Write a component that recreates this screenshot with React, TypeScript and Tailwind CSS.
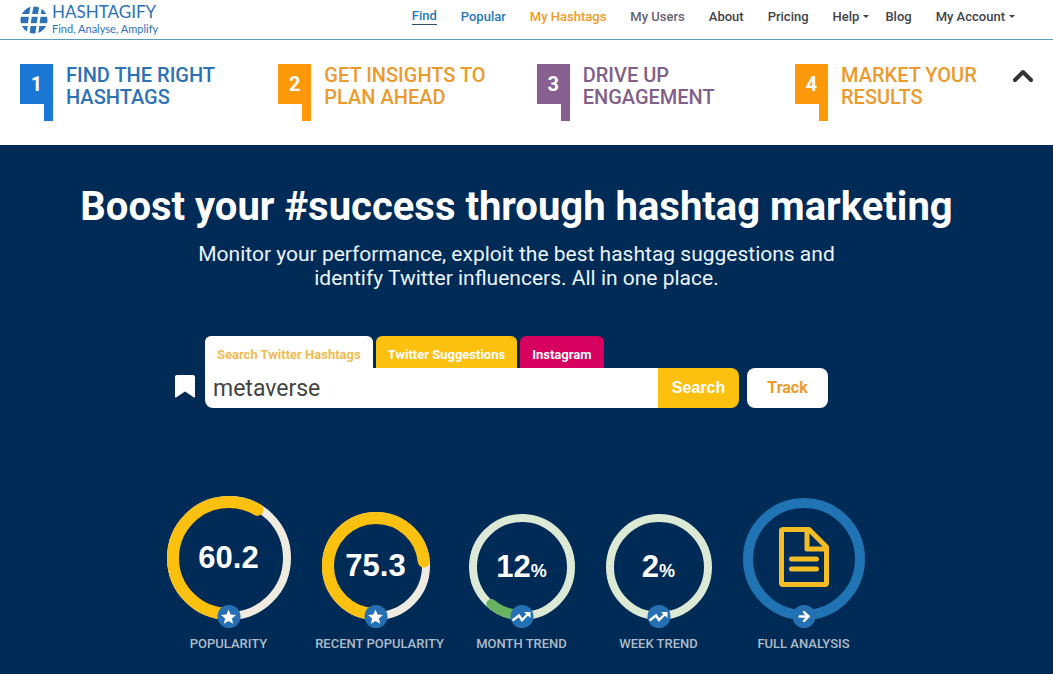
import type { ReactNode } from 'react';
import { ArrowRight, ChevronUp } from 'lucide-react';
import { MdStar } from 'react-icons/md';

const navLinks = [
  { label: 'Find', className: 'text-[#2878b5] border-b border-[#2f4f6a]' },
  { label: 'Popular', className: 'text-[#2878b5] ml-6' },
  { label: 'My Hashtags', className: 'text-[#f09a25] ml-6' },
  { label: 'My Users', className: 'text-[#666270] ml-6' },
  { label: 'About', className: 'text-[#434347] ml-6' },
  { label: 'Pricing', className: 'text-[#434347] ml-6' },
  { label: 'Help', className: 'text-[#434347] ml-6', caret: true },
  { label: 'Blog', className: 'text-[#434347] ml-4' },
  { label: 'My Account', className: 'text-[#434347] ml-6', caret: true },
];

const steps = [
  { n: 1, lines: ['FIND THE RIGHT', 'HASHTAGS'], bg: 'bg-[#1976d2]', text: 'text-[#2c72b4]' },
  { n: 2, lines: ['GET INSIGHTS TO', 'PLAN AHEAD'], bg: 'bg-[#fc990a]', text: 'text-[#eb9b2d]' },
  { n: 3, lines: ['DRIVE UP', 'ENGAGEMENT'], bg: 'bg-[#87608f]', text: 'text-[#80608a]' },
  { n: 4, lines: ['MARKET YOUR', 'RESULTS'], bg: 'bg-[#fc990a]', text: 'text-[#eb9b2d]' },
];

function Logo() {
  return (
    <a href="#home" className="flex items-center gap-1 text-[#2c72b4]">
      <svg viewBox="0 0 28 28" className="w-7 h-7">
        <circle cx="14" cy="14" r="13.5" fill="currentColor" />
        <g stroke="#fff" strokeWidth="2.8" fill="none">
          <path d="M12.5 -1 C10 8 9.5 18 8 29" />
          <path d="M21 -1 C19 8 18.5 18 16.5 29" />
          <path d="M-1 9.4 H29" />
          <path d="M-1 18.6 H29" />
        </g>
      </svg>
      <span className="font-[Lato]">
        <span className="block text-[17px] leading-[18px]">HASHTAGIFY</span>
        <span className="block text-[11px] leading-4">Find, Analyse, Amplify</span>
      </span>
    </a>
  );
}

function Step({ n, lines, bg, text }: (typeof steps)[number]) {
  return (
    <div className="flex gap-[13px]">
      <div className="w-[33px] shrink-0 flex flex-col items-end">
        <div className={`w-full h-10 flex items-center justify-center text-white text-[20px] font-bold ${bg}`}>{n}</div>
        <div className={`w-[9px] h-[17px] ${bg}`} />
      </div>
      <h2 className={`text-[20px] leading-[22px] font-medium whitespace-nowrap ${text}`}>
        {lines[0]}
        <br />
        {lines[1]}
      </h2>
    </div>
  );
}

type RingProps = {
  size: number;
  track: string;
  trackWidth: number;
  arc?: string;
  arcWidth?: number;
  percent?: number;
};

// The arc starts at the bottom and runs clockwise
function Ring({ size, track, trackWidth, arc, arcWidth = 0, percent = 0 }: RingProps) {
  const c = size / 2;
  return (
    <svg width={size} height={size} viewBox={`0 0 ${size} ${size}`} fill="none">
      <circle cx={c} cy={c} r={c - trackWidth / 2} stroke={track} strokeWidth={trackWidth} />
      {arc && (
        <circle
          cx={c}
          cy={c}
          r={c - arcWidth / 2}
          stroke={arc}
          strokeWidth={arcWidth}
          strokeLinecap="round"
          pathLength={100}
          strokeDasharray={`${percent} 100`}
          transform={`rotate(90 ${c} ${c})`}
        />
      )}
    </svg>
  );
}

function TrendIcon() {
  return (
    <svg viewBox="0 0 20 14" className="w-5 h-[14px]" fill="none" stroke="currentColor" strokeWidth="2.4">
      <path d="M1 10.5L7.5 5.5L10.5 10L16 4.5" />
      <path d="M12.5 2H19V8Z" fill="currentColor" stroke="none" />
    </svg>
  );
}

type GaugeProps = {
  ring: RingProps;
  label: string;
  badge: ReactNode;
  className?: string;
  children: ReactNode;
};

function Gauge({ ring, label, badge, className = 'items-center', children }: GaugeProps) {
  return (
    <div className={`flex flex-col ${className}`}>
      <div className="relative">
        <Ring {...ring} />
        <div className="absolute inset-0 flex items-center justify-center text-white text-[31px] font-bold font-['Liberation_Sans',sans-serif]">
          {children}
        </div>
        <div className="absolute -bottom-2 left-1/2 -translate-x-1/2 w-[23px] h-[23px] rounded-full bg-[#2470b3] text-white flex items-center justify-center">
          {badge}
        </div>
      </div>
      <div className="mt-4 self-stretch flex justify-center text-[13px] leading-4 font-medium text-[#aebccb] whitespace-nowrap">{label}</div>
    </div>
  );
}

export default function App() {
  return (
    <div className="min-h-screen bg-[#002b56] font-['Roboto',sans-serif]">
      <header className="bg-white border-b border-[#5b9bb5] h-10 pl-5 pr-[38px] flex items-start justify-between">
        <div className="pt-[3px]">
          <Logo />
        </div>
        <nav className="flex pt-2 text-[13px] leading-4 font-medium whitespace-nowrap">
          {navLinks.map((l) => (
            <a key={l.label} href="#nav" className={`flex items-center ${l.className}`}>
              {l.label}
              {l.caret && <span className="ml-1 border-x-[3px] border-t-[3px] border-x-transparent border-t-current" />}
            </a>
          ))}
        </nav>
      </header>

      <section className="bg-white px-5 pt-6 pb-6 grid grid-cols-[1fr_1fr_1fr_238px]">
        {steps.slice(0, 3).map((s) => (
          <Step key={s.n} {...s} />
        ))}
        <div className="flex items-start justify-between">
          <Step {...steps[3]} />
          <button type="button" aria-label="Collapse" className="-mr-1 text-[#333]">
            <ChevronUp className="w-7 h-6" strokeWidth={3} viewBox="3 3 18 18" preserveAspectRatio="xMidYMid meet" />
          </button>
        </div>
      </section>

      <main className="pr-5 pt-9 flex flex-col items-center">
        <h1 className="text-white text-[40px] leading-[52px] font-bold text-center">
          Boost your #success through hashtag marketing
        </h1>
        <p className="mt-[9px] text-[#eaf4fb] text-[21px] leading-6 text-center">
          Monitor your performance, exploit the best hashtag suggestions and
          <br />
          identify Twitter influencers. All in one place.
        </p>

        <form className="mt-[46px] w-full max-w-[683px] pr-[30px] flex items-end" onSubmit={(e) => e.preventDefault()}>
          <button type="button" aria-label="Bookmark" className="w-[30px] h-11 flex items-center text-white">
            <svg viewBox="0 0 20 23" className="w-5 h-[23px]" fill="currentColor">
              <path d="M2 0H18Q20 0 20 2V21.5Q20 23 18.6 22.2L10 16.5L1.4 22.2Q0 23 0 21.5V2Q0 0 2 0Z" />
            </svg>
          </button>
          <div className="flex-1">
            <div className="flex gap-[3px] text-[13px] font-bold">
              <button type="button" className="h-8 px-3 pt-[5px] rounded-t-md bg-white text-[#f0bb51]">Search Twitter Hashtags</button>
              <button type="button" className="h-8 px-3 pt-[5px] rounded-t-md bg-[#fcc00f] text-white">Twitter Suggestions</button>
              <button type="button" className="h-8 px-3 pt-[5px] rounded-t-md bg-[#d6005e] text-white">Instagram</button>
            </div>
            <div className="flex h-10">
              <input
                type="text"
                aria-label="Hashtag"
                defaultValue="metaverse"
                className="flex-1 min-w-0 bg-white rounded-bl-lg px-2 pt-[2px] text-[23px] text-[#444] outline-none"
              />
              <button type="submit" className="w-[81px] bg-[#fcc00f] text-white rounded-r-lg text-[16px] font-bold font-['Liberation_Sans',sans-serif]">Search</button>
              <button type="button" className="ml-2 w-[81px] bg-white text-[#ee9a2a] rounded-lg text-[16px] font-bold">Track</button>
            </div>
          </div>
        </form>

        <div className="mt-[88px] pb-5 pr-[2px] flex items-end gap-[31px]">
          <Gauge
            label="POPULARITY"
            ring={{ size: 124, track: '#f0ebe0', trackWidth: 8, arc: '#fcc00f', arcWidth: 12, percent: 58.5 }}
            badge={<MdStar className="w-[18px] h-[18px]" />}
          >
            60.2
          </Gauge>
          <Gauge
            label="RECENT POPULARITY"
            className="w-[116px] items-start"
            ring={{ size: 108, track: '#f0ebe0', trackWidth: 8, arc: '#fcc00f', arcWidth: 12, percent: 73.5 }}
            badge={<MdStar className="w-[18px] h-[18px]" />}
          >
            75.3
          </Gauge>
          <Gauge
            label="MONTH TREND"
            ring={{ size: 106, track: '#dbe9d5', trackWidth: 8, arc: '#67b35f', arcWidth: 10, percent: 11 }}
            badge={<TrendIcon />}
          >
            <span>12<span className="text-[18px]">%</span></span>
          </Gauge>
          <Gauge
            label="WEEK TREND"
            ring={{ size: 106, track: '#dbe9d5', trackWidth: 8 }}
            badge={<TrendIcon />}
          >
            <span>2<span className="text-[18px]">%</span></span>
          </Gauge>
          <Gauge
            label="FULL ANALYSIS"
            ring={{ size: 122, track: '#2074b4', trackWidth: 10 }}
            badge={<ArrowRight className="w-[15px] h-[15px]" strokeWidth={4} />}
          >
            <svg viewBox="0 0 50 60" className="w-[50px] h-[60px] -mt-1" fill="none" stroke="#f4bd26" strokeWidth="5" strokeLinejoin="round" strokeLinecap="round">
              <path d="M4 2.5H30L47.5 20V56Q47.5 57.5 46 57.5H4Q2.5 57.5 2.5 56V4Q2.5 2.5 4 2.5Z" />
              <path d="M28 3V22H47" />
              <path d="M12.5 32H37.5M12.5 42H37.5" />
            </svg>
          </Gauge>
        </div>
      </main>
    </div>
  );
}
